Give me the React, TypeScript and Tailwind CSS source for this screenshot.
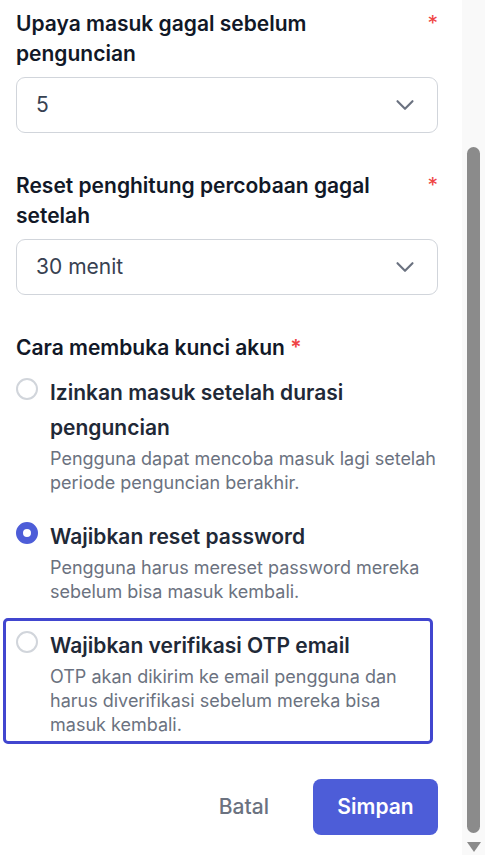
import { ChevronDown } from 'lucide-react'

type Option = {
  id: string
  title: string
  desc: string
}

const OPTIONS: Option[] = [
  { id: 'duration', title: 'Izinkan masuk setelah durasi penguncian', desc: 'Pengguna dapat mencoba masuk lagi setelah periode penguncian berakhir.' },
  { id: 'reset', title: 'Wajibkan reset password', desc: 'Pengguna harus mereset password mereka sebelum bisa masuk kembali.' },
  { id: 'otp', title: 'Wajibkan verifikasi OTP email', desc: 'OTP akan dikirim ke email pengguna dan harus diverifikasi sebelum mereka bisa masuk kembali.' },
]

function SelectBox({ value }: { value: string }) {
  return (
    <button
      type="button"
      className="w-full h-[56px] flex items-center justify-between rounded-[9px] border border-[#d1d5db] bg-white pl-[19px] pr-[17px] text-left"
    >
      <span className="text-[21px] text-[#374151]">{value}</span>
      <ChevronDown size={30} strokeWidth={1.7} className="text-[#6b7280]" />
    </button>
  )
}

function Field({ label, value }: { label: string; value: string }) {
  return (
    <div className="flex flex-col gap-2">
      <div className="flex items-start justify-between">
        <label className="max-w-[390px] text-[21px] leading-[30px] font-semibold text-[#111827]">{label}</label>
        <span className="text-[21px] leading-[30px] text-[#ef4444]">*</span>
      </div>
      <SelectBox value={value} />
    </div>
  )
}

// classic scrollbar, scrolled to the bottom
function Scrollbar() {
  return (
    <div className="w-[23px] shrink-0 bg-[#f9f9f9] flex flex-col justify-end">
      <div className="mx-[5px] h-[686px] rounded-full bg-[#8b8b8b]" />
      <div className="h-[22px] flex justify-center pt-[9px]">
        <div className="w-0 h-0 border-x-[7px] border-t-[10px] border-x-transparent border-t-[#8b8b8b]" />
      </div>
    </div>
  )
}

export default function App() {
  const selected = 'reset'
  const focused = 'otp'

  return (
    <div className="h-[855px] flex bg-white font-[Inter,'Noto_Sans',sans-serif]">
      <div className="flex-1 min-w-0 overflow-hidden">
        <div className="flex flex-col gap-[38px] pl-4 pr-6 pt-[9px] pb-[21px]">
          <Field label="Upaya masuk gagal sebelum penguncian" value="5" />
          <Field label="Reset penghitung percobaan gagal setelah" value="30 menit" />

          {/* Unlock method */}
          <div className="flex flex-col gap-[5px]">
            <div className="text-[21px] leading-[30px] font-semibold text-[#111827]">
              Cara membuka kunci akun <span className="text-[#ef4444]">*</span>
            </div>
            <div className="flex flex-col gap-[13px]">
              {OPTIONS.map((opt) => {
                const isSelected = opt.id === selected
                const isFocused = opt.id === focused
                return (
                  <label
                    key={opt.id}
                    className={`-ml-[10px] pl-[10px] pt-[7px] pb-[4px] flex items-start gap-[12px] cursor-pointer ${
                      isFocused ? 'mr-[8px] rounded-[2px] outline-solid outline-[3px] outline-[#4146cf]' : ''
                    }`}
                  >
                    <span
                      className={`mt-[3px] w-[22px] h-[22px] shrink-0 rounded-full bg-white ${
                        isSelected ? 'border-[7px] border-[#4d5dd8]' : 'border-2 border-[#d1d5db]'
                      }`}
                    />
                    <span className="flex flex-col gap-[2px]">
                      <span className="text-[21px] leading-[35px] font-semibold text-[#1f2937]">{opt.title}</span>
                      <span className="text-[18px] leading-[24px] text-[#6b7280]">{opt.desc}</span>
                    </span>
                  </label>
                )
              })}
            </div>
          </div>

          {/* Footer */}
          <div className="flex items-center justify-end gap-5">
            <button type="button" className="px-6 h-[56px] text-[21px] font-medium text-[#6b7280]">Batal</button>
            <button type="button" className="w-[125px] h-[56px] rounded-[8px] bg-[#4d5dd8] text-[21px] font-semibold text-white">Simpan</button>
          </div>
        </div>
      </div>
      <Scrollbar />
    </div>
  )
}
